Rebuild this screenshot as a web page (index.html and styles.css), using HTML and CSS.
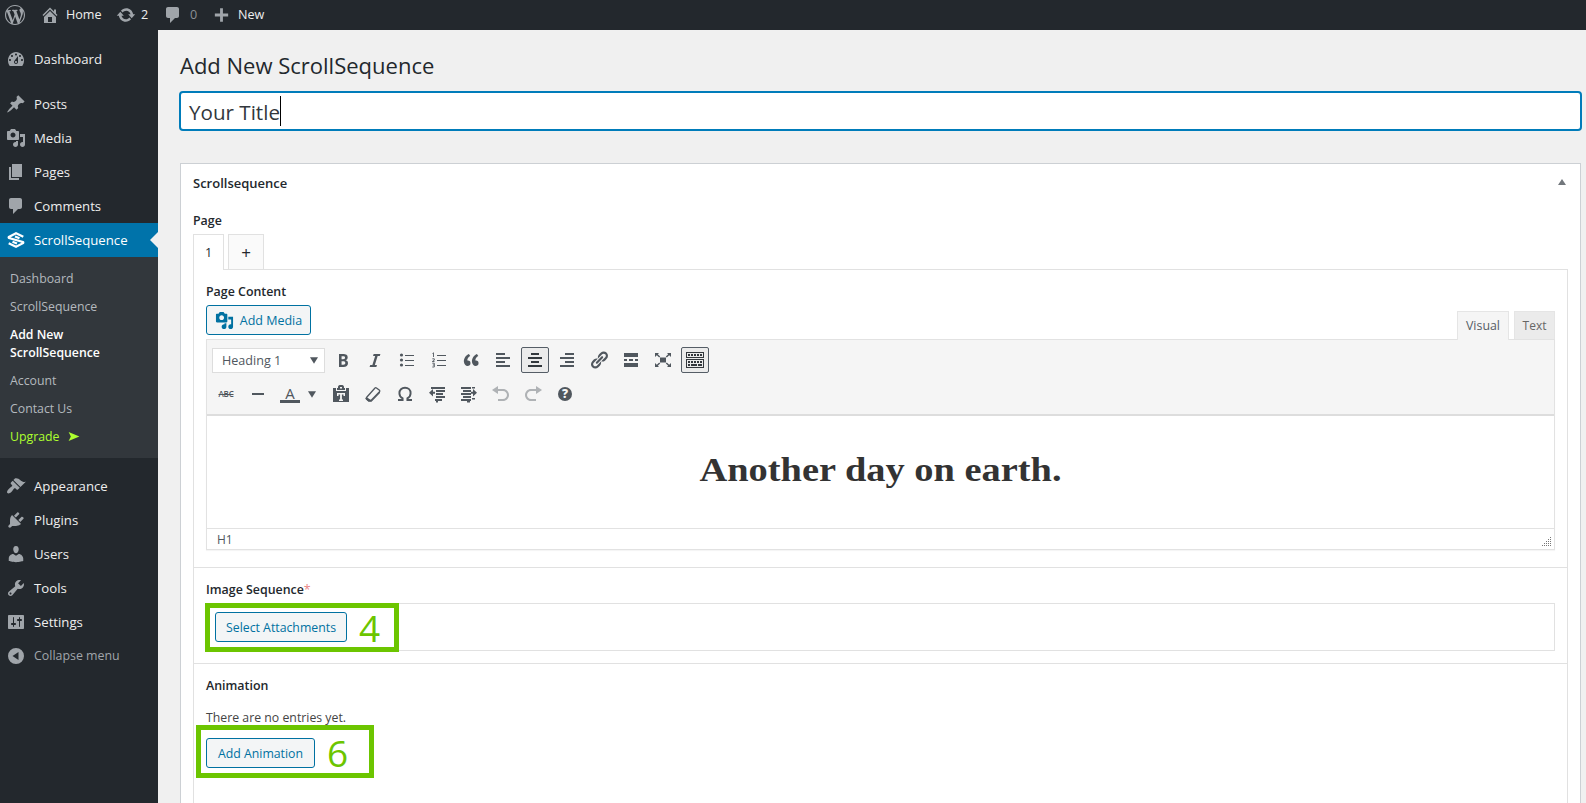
FILE: index.html
```html
<!DOCTYPE html>
<html lang="en">
<head>
<meta charset="utf-8">
<title>Add New ScrollSequence</title>
<link rel="stylesheet" href="styles.css">
</head>
<body>
<svg class="sprite" aria-hidden="true">
<symbol id="wp" viewBox="0 0 20 20"><path d="M20 10c0-5.51-4.49-10-10-10C4.48 0 0 4.49 0 10c0 5.52 4.48 10 10 10 5.51 0 10-4.48 10-10zM7.78 15.37L4.37 6.22c.55-.02 1.17-.08 1.17-.08.5-.06.44-1.13-.06-1.11 0 0-1.45.11-2.37.11-.18 0-.37 0-.58-.01C4.12 2.69 6.87 1.11 10 1.11c2.33 0 4.45.87 6.05 2.34-.68-.11-1.65.39-1.65 1.58 0 .74.45 1.36.9 2.1.35.61.55 1.36.55 2.46 0 1.49-1.4 5-1.4 5l-3.03-8.37c.54-.02.82-.17.82-.17.5-.05.44-1.25-.06-1.22 0 0-1.44.12-2.38.12-.87 0-2.33-.12-2.33-.12-.5-.03-.56 1.2-.06 1.22l.92.08 1.26 3.41zM17.41 10c.24-.64.74-1.87.43-4.25.7 1.29 1.05 2.71 1.05 4.25 0 3.29-1.73 6.24-4.4 7.78.97-2.59 1.94-5.2 2.92-7.78zM6.1 18.09C3.12 16.65 1.11 13.53 1.11 10c0-1.3.23-2.48.72-3.59C3.25 10.3 4.67 14.2 6.1 18.09zm4.03-6.63l2.58 6.98c-.86.29-1.76.45-2.71.45-.79 0-1.57-.11-2.29-.33.81-2.38 1.62-4.74 2.42-7.1z"/></symbol>
<symbol id="home" viewBox="0 0 20 20"><path d="M16 8.5l1.53 1.53-1.06 1.06L10 4.6l-6.47 6.49-1.06-1.06L10 2.5l4 4v-2h2v4zm-6-2.46l6 5.99V18H4v-5.97zM12 17v-5H8v5h4z"/></symbol>
<symbol id="update" viewBox="0 0 20 20"><path d="M10.2 3.28c3.53 0 6.43 2.61 6.92 6h2.08l-3.5 4-3.5-4h2.32c-.45-1.97-2.21-3.45-4.32-3.45-1.45 0-2.73.71-3.54 1.78L4.95 5.66C6.23 4.2 8.11 3.28 10.2 3.28zm-.4 13.44c-3.52 0-6.43-2.61-6.92-6H.8l3.5-4c1.17 1.33 2.33 2.67 3.5 4H5.48c.45 1.97 2.21 3.45 4.32 3.45 1.45 0 2.73-.71 3.54-1.78l1.71 1.95c-1.28 1.46-3.15 2.38-5.25 2.38z"/></symbol>
<symbol id="comment" viewBox="0 0 20 20"><path d="M5 2h9c1.1 0 2 .9 2 2v7c0 1.1-.9 2-2 2h-2l-5 5v-5H5c-1.1 0-2-.9-2-2V4c0-1.1.9-2 2-2z"/></symbol>
<symbol id="plus" viewBox="0 0 20 20"><path d="M17 8.5v3h-5.500v5.500h-3v-5.500H3v-3h5.500V3h3v5.500z"/></symbol>
<symbol id="dash" viewBox="0 0 20 20"><path d="M3.760 17h12.480c1.100-1.370 1.760-3.610 1.760-5.500 0-4.420-3.580-8.500-8-8.500s-8 4.080-8 8.500c0 1.890.66 4.130 1.760 5.500zM10 4.500c.55 0 1 .45 1 1s-.45 1-1 1-1-.45-1-1 .45-1 1-1zM6 6c.55 0 1 .45 1 1s-.45 1-1 1-1-.45-1-1 .45-1 1-1zm8 0c.55 0 1 .45 1 1s-.45 1-1 1-1-.45-1-1 .45-1 1-1zm-5.370 5.550L12 7v6c0 1.100-.9 2-2 2s-2-.9-2-2c0-.57.24-1.080.63-1.450zM4 10c.55 0 1 .45 1 1s-.45 1-1 1-1-.45-1-1 .45-1 1-1zm12 0c.55 0 1 .45 1 1s-.45 1-1 1-1-.45-1-1 .45-1 1-1zm-5 3c0-.55-.45-1-1-1s-1 .45-1 1 .45 1 1 1 1-.45 1-1z"/></symbol>
<symbol id="post" viewBox="0 0 20 20"><path d="M10.440 3.020l1.820-1.820 6.360 6.350-1.830 1.820c-1.050-.68-2.480-.57-3.410.36l-.75.75c-.92.93-1.040 2.350-.35 3.410l-1.830 1.820-2.410-2.410-2.800 2.790c-.42.42-3.380 2.710-3.800 2.290s1.860-3.390 2.280-3.810l2.790-2.790L4.100 9.360l1.830-1.820c1.050.69 2.480.57 3.400-.36l.75-.75c.93-.92 1.050-2.350.36-3.410z"/></symbol>
<symbol id="media" viewBox="0 0 20 20"><path d="M13 11V4c0-.55-.45-1-1-1h-1.670L9 1H5L3.670 3H2c-.55 0-1 .45-1 1v7c0 .55.45 1 1 1h10c.55 0 1-.45 1-1zM7 4.500c1.380 0 2.500 1.120 2.500 2.500S8.380 9.500 7 9.500 4.500 8.380 4.500 7 5.620 4.500 7 4.500zM14 6h5v10.500c0 1.380-1.120 2.500-2.500 2.500S14 17.880 14 16.500s1.120-2.500 2.500-2.500c.17 0 .34.02.5.05V9h-3V6zm-4 8.050V13h2v3.500c0 1.380-1.120 2.500-2.500 2.500S7 17.880 7 16.500 8.120 14 9.500 14c.17 0 .34.02.5.05z"/></symbol>
<symbol id="page" viewBox="0 0 20 20"><path d="M6 15V2h10v13H6zm-1 1h8v2H3V5h2v11z"/></symbol>
<symbol id="brush" viewBox="0 0 20 20"><path d="M14.480 11.060L7.410 3.990l1.500-1.500c.5-.56 2.300-.47 3.510.32 1.210.8 1.430 1.280 2.910 2.100 1.180.64 2.450 1.260 4.450.85zm-.71.71L6.700 4.700 4.930 6.470c-.39.39-.39 1.020 0 1.410l1.060 1.060c.39.39.39 1.030 0 1.420-.6.6-1.430 1.110-2.210 1.690-.35.26-.7.53-1.010.84C1.430 14.230.4 16.080 1.400 17.070c.99 1 2.840-.03 4.180-1.360.31-.31.58-.66.85-1.020.57-.78 1.080-1.610 1.690-2.210.39-.39 1.020-.39 1.410 0l1.060 1.060c.39.39 1.020.39 1.410 0z"/></symbol>
<symbol id="plug" viewBox="0 0 20 20"><path d="M13.110 4.360L9.870 7.600 8 5.730l3.240-3.240c.35-.34 1.050-.2 1.560.32.52.51.66 1.210.31 1.550zm-8 1.770l.91-1.120 9.010 9.010-1.190.84c-.71.71-2.630 1.160-3.820 1.160H6.140L4.900 17.260c-.59.59-1.540.59-2.120 0-.59-.58-.59-1.530 0-2.120l1.240-1.240v-3.880c0-1.130.4-3.190 1.090-3.890zm7.260 3.970l3.240-3.240c.34-.35 1.040-.21 1.550.31.52.51.66 1.210.31 1.550l-3.240 3.250z"/></symbol>
<symbol id="user" viewBox="0 0 20 20"><path d="M10 9.250c-2.270 0-2.730-3.440-2.730-3.440C7 4.020 7.820 2 9.970 2c2.160 0 2.980 2.020 2.710 3.810 0 0-.41 3.440-2.680 3.440zm0 2.570L12.720 10c2.390 0 4.520 2.330 4.520 4.530v2.490s-3.650 1.130-7.240 1.130c-3.650 0-7.240-1.130-7.240-1.130v-2.490c0-2.250 1.940-4.480 4.470-4.480z"/></symbol>
<symbol id="tool" viewBox="0 0 20 20"><path d="M16.680 9.770c-1.340 1.340-3.300 1.670-4.950.99l-5.410 6.520c-.99.99-2.590.99-3.580 0s-.99-2.590 0-3.570l6.520-5.420c-.68-1.650-.35-3.610.99-4.950 1.280-1.280 3.120-1.620 4.720-1.060l-2.890 2.890 2.820 2.820 2.860-2.870c.53 1.580.18 3.390-1.080 4.650zM3.810 16.210c.4.39 1.040.39 1.430 0 .4-.4.4-1.040 0-1.430-.39-.4-1.030-.4-1.430 0-.39.39-.39 1.030 0 1.430z"/></symbol>
<symbol id="gear" viewBox="0 0 20 20"><path d="M18 16V4c0-.55-.45-1-1-1H3c-.55 0-1 .45-1 1v12c0 .55.45 1 1 1h14c.55 0 1-.45 1-1zM8 11h1c.55 0 1 .45 1 1s-.45 1-1 1H8v1.500c0 .28-.22.5-.5.5s-.5-.22-.5-.5V13H6c-.55 0-1-.45-1-1s.45-1 1-1h1V5.500c0-.28.22-.5.5-.5s.5.22.5.5V11zm5-2h-1c-.55 0-1-.45-1-1s.45-1 1-1h1V5.500c0-.28.22-.5.5-.5s.5.22.5.5V7h1c.55 0 1 .45 1 1s-.45 1-1 1h-1v5.500c0 .28-.22.5-.5.5s-.5-.22-.5-.5V9z"/></symbol>
<symbol id="collapse" viewBox="0 0 20 20"><path fill-rule="evenodd" d="M10 2a8 8 0 1 0 0 16a8 8 0 1 0 0-16zM12.500 6v8L6.500 10z"/></symbol>
<symbol id="seq" viewBox="0 0 20 20"><path d="M17.300 6.800L10 3.300 2.900 6.900q-.6.600.1 1.100L16.900 12q.8.500.1 1.200L10 16.700 2.700 13.200M13.500 8.300L9 6.500M6.500 11.700L11 13.500" fill="none" stroke="currentColor" stroke-width="2.200"/></symbol>
<symbol id="bold" viewBox="0 0 20 20"><path d="M6 4v13h4.540c1.370 0 2.460-.33 3.260-1 .8-.66 1.200-1.580 1.200-2.770 0-.84-.17-1.510-.51-2.010s-.9-.85-1.670-1.030v-.09c.57-.1 1.020-.4 1.360-.9s.51-1.130.51-1.910c0-1.140-.39-1.980-1.170-2.500C12.750 4.260 11.500 4 9.780 4H6zm2.570 5.150V6.260h1.360c.73 0 1.270.11 1.610.32.34.22.51.58.51 1.070 0 .54-.16.92-.47 1.150s-.82.35-1.510.35h-1.500zm0 2.190h1.600c1.440 0 2.160.53 2.160 1.610 0 .6-.17 1.050-.51 1.340s-.86.43-1.570.43H8.570v-3.380z"/></symbol>
<symbol id="italic" viewBox="0 0 20 20"><path d="M14.780 6h-2.130l-2.800 9h2.120l-.62 2H4.600l.62-2h2.140l2.800-9H8.030l.62-2h6.750z"/></symbol>
<symbol id="ul" viewBox="0 0 20 20"><circle cx="4.500" cy="5" r="1.600"/><circle cx="4.500" cy="10" r="1.600"/><circle cx="4.500" cy="15" r="1.600"/><path d="M8 5h9v1H8zM8 10h9v1H8zM8 15h9v1H8z"/></symbol>
<symbol id="ol" viewBox="0 0 20 20"><path d="M8 5h9v1H8zM8 10h9v1H8zM8 15h9v1H8z"/><path d="M3.500 3.500l1-.7V7M3.300 8.800h2v1.400l-2 1.300h2.200M3.300 13.200h2v3.800h-2M3.800 15h1.500" fill="none" stroke="currentColor" stroke-width=".9"/></symbol>
<symbol id="quote" viewBox="0 0 20 20"><path d="M9.490 13.220c0-.74-.2-1.380-.61-1.900-.62-.78-1.830-.88-2.530-.72-.29-1.650 1.110-3.750 2.920-4.650L7.880 4c-2.730 1.300-5.420 4.280-4.960 8.050C3.210 14.430 4.590 16 6.540 16c.85 0 1.560-.25 2.120-.75s.83-1.180.83-2.030zm8.050 0c0-.74-.2-1.380-.61-1.900-.63-.78-1.830-.88-2.530-.72-.29-1.650 1.110-3.750 2.920-4.650L15.930 4c-2.730 1.300-5.410 4.280-4.950 8.050.29 2.380 1.660 3.950 3.610 3.950.85 0 1.560-.25 2.120-.75s.83-1.180.83-2.030z"/></symbol>
<symbol id="left" viewBox="0 0 20 20"><path d="M3 3h9v2H3zM3 7h14v2H3zM3 11h9v2H3zM3 15h14v2H3z"/></symbol>
<symbol id="center" viewBox="0 0 20 20"><path d="M6 3h8v2H6zM3 7h14v2H3zM6 11h8v2H6zM3 15h14v2H3z"/></symbol>
<symbol id="right" viewBox="0 0 20 20"><path d="M8 3h9v2H8zM3 7h14v2H3zM8 11h9v2H8zM3 15h14v2H3z"/></symbol>
<symbol id="link" viewBox="0 0 20 20"><path d="M17.740 2.760c1.680 1.690 1.680 4.410 0 6.100l-1.530 1.520c-1.120 1.120-2.700 1.470-4.140 1.090l2.620-2.610.76-.77.76-.76c.84-.84.84-2.200 0-3.040-.84-.85-2.200-.85-3.040 0l-.77.76-3.380 3.380c-.37-1.440-.02-3.020 1.100-4.140l1.520-1.530c1.690-1.680 4.420-1.680 6.100 0zM8.590 13.430l5.340-5.340c.42-.42.42-1.100 0-1.520-.44-.43-1.130-.39-1.530 0l-5.330 5.340c-.42.42-.42 1.100 0 1.520.44.43 1.130.39 1.520 0zm-.76 2.290l4.140-4.150c.38 1.440.03 3.020-1.090 4.140l-1.520 1.530c-1.690 1.680-4.410 1.680-6.100 0-1.680-1.680-1.680-4.420 0-6.100l1.530-1.520c1.120-1.120 2.700-1.470 4.140-1.100l-4.140 4.150c-.85.84-.85 2.200 0 3.050.84.84 2.200.84 3.040 0z"/></symbol>
<symbol id="more" viewBox="0 0 20 20"><path d="M3 3h14v4H3zM3 9h3v2H3zM8 9h4v2H8zM14 9h3v2h-3zM3 13h14v4H3z"/></symbol>
<symbol id="full" viewBox="0 0 20 20"><path d="M7 7.500h6v5H7zM2 3h4L4.800 4.200l2.400 2.300-1 1-2.400-2.300L2 7zM18 3v4l-1.800-1.800-2.400 2.300-1-1 2.400-2.300L14 3zM2 17v-4l1.800 1.800 2.400-2.300 1 1-2.400 2.300L6 17zM18 17h-4l1.200-1.200-2.400-2.300 1-1 2.400 2.300L18 13z"/></symbol>
<symbol id="sink" viewBox="0 0 20 20"><path fill-rule="evenodd" d="M1 2h18v6H1zm1 1v4h16V3zM1 9h18v9H1zm1 1v7h16v-7z"/><path d="M3 4h2v2H3zM6 4h2v2H6zM9 4h2v2H9zM12 4h2v2h-2zM15 4h2v2h-2zM3 11h2v2H3zM6 11h2v2H6zM9 11h2v2H9zM12 11h2v2h-2zM15 11h2v2h-2zM3 14h2v2H3zM6 14h6v2H6zM13 14h4v2h-4z"/></symbol>
<symbol id="paste" viewBox="0 0 20 20"><path fill-rule="evenodd" d="M7 4V3c0-1 .7-2 1.700-2h2.600c1 0 1.700 1 1.700 2v1h1v2H6V4zm2-1v1.500h2V3zM2 4h3v3h10V4h3v14H2zM6 9v3h1.500v-1.500h1.600v5H8V17h4v-1.500h-1.100v-5h1.600V12H14V9z"/></symbol>
<symbol id="eraser" viewBox="0 0 20 20"><path d="M3.500 13.500L12 4q.7-.6 1.500 0l3 2.300q.7.700 0 1.500L8 16.500H5.500L3 14.500z" fill="none" stroke="currentColor" stroke-width="1.300"/><path d="M3.500 13l5 3.500 8.500-9v1.500L8.500 17.800H5.500L3 15.500z"/></symbol>
<symbol id="omega" viewBox="0 0 20 20"><path d="M3 16h4.600v-1.600C5.300 13 4.400 11.300 4.400 9.200 4.400 6 6.700 3.800 10 3.800s5.600 2.200 5.600 5.400c0 2.100-.9 3.800-3.200 5.200V16H17" fill="none" stroke="currentColor" stroke-width="1.900"/></symbol>
<symbol id="outdent" viewBox="0 0 20 20"><path d="M4 3h14v2H4zM9 6h9v2H9zM9 9h7v2H9zM9 12h9v2H9zM8 15h7v2H8zM6 5v2.700h2v2H6v2.800L2 8.700zM9 17h2v1.500H9z"/></symbol>
<symbol id="indent" viewBox="0 0 20 20"><path d="M2 3h10v2H2zM4 6h8v2H4zM2 9h10v2H2zM4 12h8v2H4zM2 15h10v2H2zM13 3h3v1.500h-3zM13 14h3v1.500h-3zM14 5l4 3.700-4 3.800v-2.800h-2v-2h2zM8 17h3v1.500H8z"/></symbol>
<symbol id="undo" viewBox="0 0 20 20"><path d="M12 5H7V2L1 6l6 4V7h5c2.200 0 4 1.800 4 4s-1.800 4-4 4H7v2h5c3.300 0 6-2.700 6-6s-2.700-6-6-6z"/></symbol>
<symbol id="redo" viewBox="0 0 20 20"><path d="M8 5h5V2l6 4-6 4V7H8c-2.200 0-4 1.800-4 4s1.800 4 4 4h5v2H8c-3.300 0-6-2.700-6-6s2.700-6 6-6z"/></symbol>
<symbol id="tri" viewBox="0 0 10 8"><path d="M0 0h10L5 8z"/></symbol>
</svg>

<header class="bar">
  <svg class="i wp"><use href="#wp"/></svg>
  <span class="bar-item home"><svg class="i"><use href="#home"/></svg><span>Home</span></span>
  <span class="bar-item upd"><svg class="i"><use href="#update"/></svg><span>2</span></span>
  <span class="bar-item com"><svg class="i"><use href="#comment"/></svg><span>0</span></span>
  <span class="bar-item new"><svg class="i"><use href="#plus"/></svg><span>New</span></span>
</header>

<div class="shell">
<nav class="side">
  <a class="m"><svg class="i"><use href="#dash"/></svg><span>Dashboard</span></a>
  <div class="gap-a"></div>
  <a class="m"><svg class="i"><use href="#post"/></svg><span>Posts</span></a>
  <a class="m"><svg class="i"><use href="#media"/></svg><span>Media</span></a>
  <a class="m"><svg class="i"><use href="#page"/></svg><span>Pages</span></a>
  <a class="m"><svg class="i"><use href="#comment"/></svg><span>Comments</span></a>
  <a class="m on"><svg class="i"><use href="#seq"/></svg><span>ScrollSequence</span></a>
  <div class="sub">
    <a>Dashboard</a>
    <a>ScrollSequence</a>
    <a class="cur">Add New<br>ScrollSequence</a>
    <a>Account</a>
    <a>Contact Us</a>
    <a class="up">Upgrade <svg class="arrow" viewBox="0 0 12 10"><path d="M0 0l12 5L0 10l2.500-5z"/></svg></a>
  </div>
  <div class="gap-b"></div>
  <a class="m"><svg class="i"><use href="#brush"/></svg><span>Appearance</span></a>
  <a class="m"><svg class="i"><use href="#plug"/></svg><span>Plugins</span></a>
  <a class="m"><svg class="i"><use href="#user"/></svg><span>Users</span></a>
  <a class="m"><svg class="i"><use href="#tool"/></svg><span>Tools</span></a>
  <a class="m"><svg class="i"><use href="#gear"/></svg><span>Settings</span></a>
  <a class="m col"><svg class="i"><use href="#collapse"/></svg><span>Collapse menu</span></a>
</nav>

<main class="main">
  <h1 class="title">Add New ScrollSequence</h1>
  <div class="name"><span>Your Title</span><i class="caret"></i></div>

  <section class="panel">
    <div class="panel-head"><span class="lbl">Scrollsequence</span><svg class="toggle" viewBox="0 0 8 6"><path d="M0 6h8L4 0z"/></svg></div>
    <div class="lbl page-lbl">Page</div>
    <div class="tabs"><span class="tab act">1</span><span class="tab add">+</span></div>
    <div class="box">
      <div class="sec content">
        <div class="lbl">Page Content</div>
        <div class="ed-top">
          <span class="btn media"><svg class="i"><use href="#media"/></svg><span>Add Media</span></span>
          <span class="modes"><span class="mode vis">Visual</span><span class="mode txt">Text</span></span>
        </div>
        <div class="editor">
          <div class="tools">
            <div class="row">
              <span class="select"><span>Heading 1</span><svg class="tri"><use href="#tri"/></svg></span>
              <span class="t"><svg class="i"><use href="#bold"/></svg></span>
              <span class="t"><svg class="i"><use href="#italic"/></svg></span>
              <span class="t"><svg class="i"><use href="#ul"/></svg></span>
              <span class="t"><svg class="i"><use href="#ol"/></svg></span>
              <span class="t"><svg class="i"><use href="#quote"/></svg></span>
              <span class="t"><svg class="i"><use href="#left"/></svg></span>
              <span class="t press"><svg class="i"><use href="#center"/></svg></span>
              <span class="t"><svg class="i"><use href="#right"/></svg></span>
              <span class="t"><svg class="i"><use href="#link"/></svg></span>
              <span class="t"><svg class="i"><use href="#more"/></svg></span>
              <span class="t"><svg class="i"><use href="#full"/></svg></span>
              <span class="t press"><svg class="i"><use href="#sink"/></svg></span>
            </div>
            <div class="row">
              <span class="t abc">ABC</span>
              <span class="t"><i class="rule"></i></span>
              <span class="t color"><span>A</span></span>
              <span class="drop"><svg class="tri"><use href="#tri"/></svg></span>
              <span class="t"><svg class="i"><use href="#paste"/></svg></span>
              <span class="t"><svg class="i"><use href="#eraser"/></svg></span>
              <span class="t"><svg class="i"><use href="#omega"/></svg></span>
              <span class="t"><svg class="i"><use href="#outdent"/></svg></span>
              <span class="t"><svg class="i"><use href="#indent"/></svg></span>
              <span class="t off"><svg class="i"><use href="#undo"/></svg></span>
              <span class="t off"><svg class="i"><use href="#redo"/></svg></span>
              <span class="t"><span class="help">?</span></span>
            </div>
          </div>
          <div class="canvas"><h2>Another day on earth.</h2></div>
          <div class="status"><span>H1</span><svg class="grip" viewBox="0 0 10 10"><path d="M8 0h1v1H8zM6 2h1v1H6zM8 2h1v1H8zM4 4h1v1H4zM6 4h1v1H6zM8 4h1v1H8zM2 6h1v1H2zM4 6h1v1H4zM6 6h1v1H6zM8 6h1v1H8zM0 8h1v1H0zM2 8h1v1H2zM4 8h1v1H4zM6 8h1v1H6zM8 8h1v1H8z"/></svg></div>
        </div>
      </div>
      <div class="sec images">
        <div class="lbl">Image Sequence<span class="req">*</span></div>
        <div class="field"><span class="btn sel">Select Attachments</span><div class="mark four"><span>4</span></div></div>
      </div>
      <div class="sec anim">
        <div class="lbl">Animation</div>
        <div class="empty">There are no entries yet.</div>
        <div class="anim-row"><span class="btn addan">Add Animation</span><div class="mark six"><span>6</span></div></div>
      </div>
    </div>
  </section>
</main>
</div>
</body>
</html>
```

FILE: styles.css
```css
* { box-sizing: border-box; }
html { overflow: hidden; }
body { margin: 0; height: 803px; overflow: hidden; background: #f0f0f0; color: #23282d; font: 13.2px/18px "Open Sans", "Noto Sans", sans-serif; }
.sprite { position: absolute; width: 0; height: 0; }
.i { display: block; width: 20px; height: 20px; flex: none; fill: currentColor; }

.bar { display: flex; align-items: center; height: 30px; padding-left: 5px; background: #23282d; color: #eee; font-size: 12.6px; }
.bar .i { color: #a0a5aa; }
.bar-item { display: flex; align-items: center; }
.bar-item span { line-height: 28px; padding-bottom: 1px; }
.home { margin-left: 15px; gap: 6px; width: 76px; }
.upd { gap: 5px; width: 47px; }
.com { gap: 7px; width: 49px; }
.com span { color: #8b9095; }
.new { gap: 7px; }
.bar .new .i { width: 19px; }

.shell { display: flex; height: 773px; }
.side { width: 158px; flex: none; padding-top: 12px; background: #23282d; }
.m { display: flex; align-items: center; height: 34px; padding-left: 6px; gap: 8px; color: #eee; position: relative; }
.m span { padding-bottom: 1px; }
.m .i { color: #a0a5aa; }
.gap-a, .gap-b { height: 11px; }
.on { background: #0073aa; color: #fff; }
.on .i { color: #fff; }
.on::after { content: ""; position: absolute; right: 0; top: 9px; border: 8px solid transparent; border-left: 0; border-right-color: #f0f0f0; }
.sub { display: flex; flex-direction: column; gap: 10px; height: 201px; padding: 13px 10px 0; background: #32373c; color: #b4b9be; font-size: 12.3px; }
.cur { color: #fff; font-weight: 600; }
.up { color: #adff2f; }
.arrow { width: 12px; height: 9px; margin-left: 5px; fill: currentColor; }
.col { color: #a0a5aa; font-size: 12.4px; }

.main { flex: 1; height: 773px; overflow: hidden; padding: 22px 0 0 22px; }
.title { margin: 0 0 13px; font-size: 22px; font-weight: 400; line-height: 26px; }
.title, .name { color: #23282d; }
.name { display: flex; align-items: center; width: 1403px; height: 40px; margin-left: -1px; padding-left: 8px; background: #fff; border: 2px solid #007cba; border-radius: 4px; font-size: 20.6px; }
.name span { padding-top: 2px; color: #32373c; }
.caret { width: 1px; height: 30px; background: #000; }

.panel { width: 1401px; height: 640px; overflow: hidden; margin-top: 32px; padding: 0 12px; background: #fff; border: 1px solid #ccd0d4; border-bottom: 0; }
.lbl { font-size: 12.4px; font-weight: 600; }
.panel-head { display: flex; align-items: center; justify-content: space-between; height: 37px; }
.panel-head .lbl { font-size: 13px; }
.toggle { width: 8px; height: 6px; margin: 0 2px 1px 0; fill: #72777c; }
.page-lbl { height: 18px; margin-top: 11px; }
.tabs { display: flex; gap: 4px; height: 35px; margin-top: 4px; }
.tab { display: flex; align-items: center; justify-content: center; border: 1px solid #e1e1e1; border-bottom: 0; font-size: 12.6px; }
.act { width: 31px; height: 36px; background: #fff; z-index: 1; }
.add { width: 36px; padding-top: 2px; background: #fafafa; font-size: 17px; }
.box { width: 1375px; height: 540px; border: 1px solid #e1e1e1; border-bottom: 0; }
.sec { padding: 0 12px; border-bottom: 1px solid #e1e1e1; }
.content { height: 298px; padding-top: 13px; }
.ed-top { display: flex; justify-content: space-between; width: 1349px; margin-top: 4px; height: 34px; }
.btn { display: inline-flex; align-items: center; justify-content: center; height: 30px; padding-top: 1px; background: #f3f5f6; border: 1px solid #0071a1; border-radius: 3px; color: #0071a1; font-size: 12.3px; }
.media { width: 105px; gap: 6px; font-size: 12.5px; }
.media .i { width: 19px; height: 19px; }
.modes { display: flex; align-items: flex-end; gap: 5px; }
.mode { display: flex; align-items: center; justify-content: center; height: 28px; border: 1px solid #e5e5e5; border-bottom: 0; color: #555d66; font-size: 12.4px; }
.vis { width: 52px; height: 29px; margin-bottom: -1px; background: #f5f5f5; z-index: 1; }
.txt { width: 41px; background: #ebebeb; color: #666; font-size: 12px; }
.editor { border: 1px solid #e2e2e2; width: 1349px; box-shadow: 0 1px 1px rgba(0,0,0,.04); }
.tools { height: 76px; padding: 7px 5px; background: #f5f5f5; border-bottom: 2px solid #ddd; color: #50575e; }
.row { display: flex; align-items: center; gap: 4px; height: 26px; margin-bottom: 8px; }
.select { display: flex; align-items: center; justify-content: space-between; width: 113px; height: 25px; padding: 1px 6px 0 9px; background: #fff; border: 1px solid #ddd; font-size: 12.6px; }
.tri { width: 8px; height: 7px; fill: currentColor; }
.t { display: flex; align-items: center; justify-content: center; width: 28px; height: 26px; flex: none; }
.press { border: 1px solid #555d66; border-radius: 2px; background: #ebebeb; color: #32373c; }
.abc { font-size: 8px; font-weight: 600; letter-spacing: -.2px; text-decoration: line-through; }
.rule { width: 12px; height: 2px; background: currentColor; }
.color { font-size: 15px; }
.color span { width: 20px; height: 18px; line-height: 16px; text-align: center; border-bottom: 3px solid currentColor; }
.drop { display: flex; width: 15px; }
.help { width: 14px; height: 14px; border-radius: 50%; background: #50575e; color: #f5f5f5; text-align: center; line-height: 14px; font-size: 12px; font-weight: 800; }
.off { opacity: .42; }
.canvas { height: 112px; padding-top: 34px; text-align: center; }
.canvas h2 { margin: 0; font: bold 34px/40px "Liberation Serif", serif; transform: scaleX(1.13); color: #333; }
.status { display: flex; justify-content: space-between; align-items: center; height: 21px; padding: 1px 2px 0 10px; border-top: 1px solid #e2e2e2; font-size: 12px; color: #50575e; }
.grip { width: 10px; height: 10px; margin-top: 5px; fill: #777; }
.images { height: 96px; padding-top: 13px; }
.req { color: #dc3232; opacity: .6; font-weight: 400; }
.field { position: relative; width: 1349px; height: 48px; margin-top: 4px; padding: 8px; border: 1px solid #e1e1e1; }
.sel { width: 132px; }
.mark { position: absolute; border: 5px solid #6cc500; color: #6cc500; font-size: 37px; font-weight: 500; line-height: 40px; }
.mark span { position: absolute; }
.four { left: -2px; top: -1px; width: 194px; height: 49px; }
.four span { left: 149px; top: 0; }
.anim { border: 0; padding-top: 13px; }
.empty { margin-top: 14px; font-size: 12.3px; color: #444; }
.anim-row { position: relative; margin-top: 11px; display: flex; }
.addan { width: 109px; }
.six { left: -10px; top: -13px; width: 178px; height: 53px; }
.six span { left: 126px; top: 3px; }
```
